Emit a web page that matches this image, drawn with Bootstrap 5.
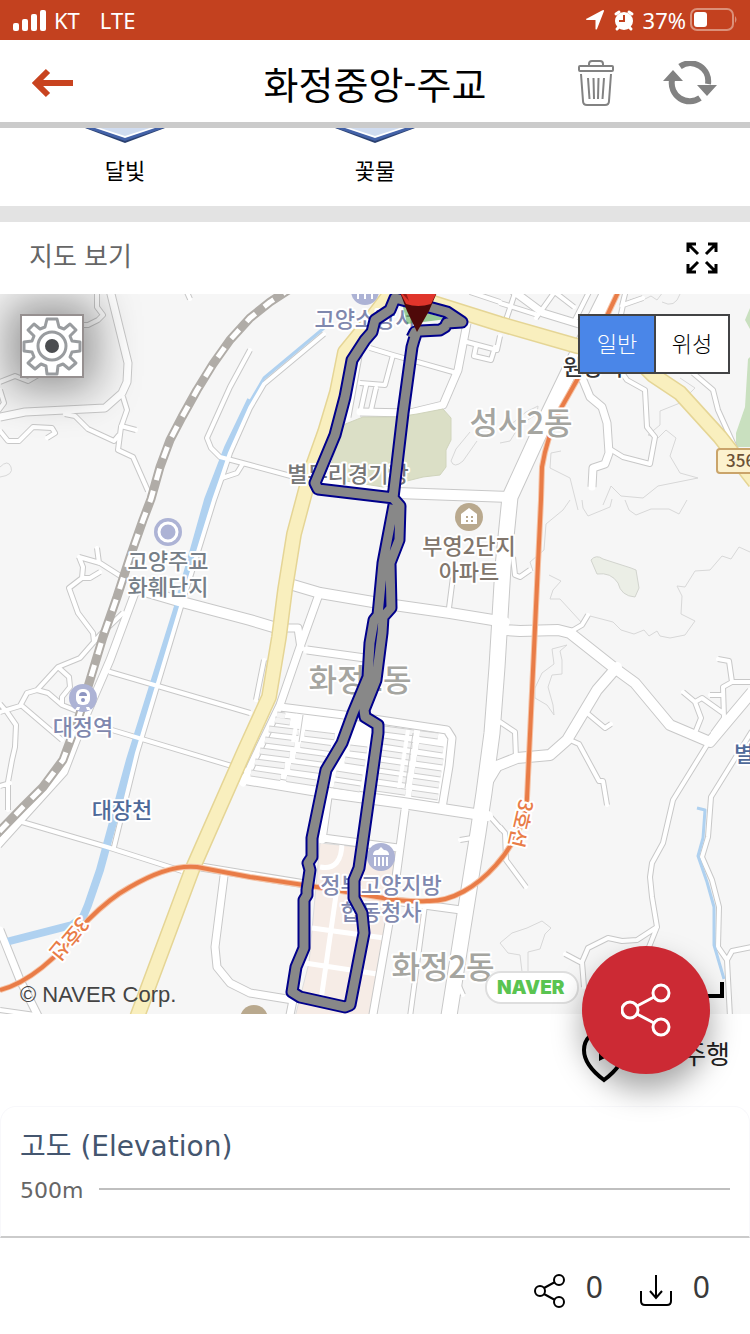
<!DOCTYPE html>
<html lang="ko">
<head>
<meta charset="utf-8">
<meta name="viewport" content="width=device-width, initial-scale=1">
<title>화정중앙-주교</title>
<link href="https://cdn.jsdelivr.net/npm/bootstrap@5.3.0/dist/css/bootstrap.min.css" rel="stylesheet">
<style>
body{font-family:"Noto Sans CJK KR","Noto Sans",sans-serif;background:#fff;color:#000}
svg{display:block}
.statusbar{background:#c3411f;color:#fff;height:40px;font:22px/40px "Noto Sans",sans-serif;padding:0 12px}
.carrier{margin-right:20px}
.topbar{height:88px;border-bottom:6px solid #cbcbcb;padding-top:4px}
.topbar h1{font-size:38px;line-height:56px;font-weight:400}
.topbar .side{flex:1 1 0}
.iconbtn{border:0;background:none;padding:0;color:inherit}
.crews{height:94px;border-bottom:16px solid #e3e3e3;font-size:22px;line-height:32px}
.crews .name{margin-top:9px}
.maphead{height:72px;background:#fff;z-index:1}
.maphead h2{font-size:26px;line-height:36px;font-weight:400;color:#666;padding-left:29px;padding-bottom:6px}
.mapbox{height:720px;background:#f6f6f6}
.mapbox>svg{width:100%;height:100%}
.gear{width:64px;height:64px;top:20px;left:20px;background:#fff;border:2px solid #969090;padding:0;box-shadow:0 0 44px 12px rgba(0,0,0,.4)}
.kinds{top:20px;right:20px;border:2px solid #424345}
.kinds label{width:74px;height:56px;font-size:22px;line-height:52px;font-weight:300;cursor:pointer;text-align:center}
.kinds label+input+label{border-left:2px solid #424345}
.kinds label{background:#fff}
.kinds input:checked+label{background:#4a86e8;color:#fff}
.copy{left:20px;bottom:4px;font:22px/30px "Liberation Sans",sans-serif;color:#444}
.ride{height:92px;font-size:26px;color:#222}
.fab{width:128px;height:128px;right:40px;bottom:-60px;background:#cc2a34;border:0;border-radius:50%;box-shadow:0 16px 30px rgba(0,0,0,.35);z-index:2}
.elev{border:1px solid #f8f8fb;border-bottom:2px solid #cbcbcb;border-radius:16px 16px 0 0;height:132px;padding:20px 19px 0}
.elev h2{font:400 28px/40px "DejaVu Sans","Noto Sans CJK KR",sans-serif;color:#44566f}
.elev .tick{font:22px/32px "DejaVu Sans",sans-serif;color:#666}
.elev .rule{height:2px;background:#bfbfbf}
.foot{font:30px/40px "Noto Sans",sans-serif;color:#3a3a3a}
.halo text{paint-order:stroke;stroke:#fff;stroke-width:4px;stroke-linejoin:round;font-family:"Noto Sans CJK KR",sans-serif;text-anchor:middle}
</style>
</head>
<body>
<div class="statusbar d-flex align-items-center">
  <svg width="34" height="22" viewBox="0 0 34 22" fill="#fff"><rect x="1" y="14" width="6" height="8" rx="2"/><rect x="10" y="10" width="6" height="12" rx="2"/><rect x="19" y="5" width="6" height="17" rx="2"/><rect x="28" y="1" width="6" height="21" rx="2"/></svg>
  <span class="ms-2 carrier">KT</span><span class="me-auto">LTE</span>
  <svg width="20" height="20" viewBox="0 0 20 20" fill="#fff"><path d="M19 1 12 19Q11 20 10.500 19V10H2Q0 9 2 8.500L17 0.500Q19-.5 19 1z"/></svg>
  <svg class="ms-2" width="22" height="24" viewBox="1 0 22 24"><circle cx="12" cy="13" r="9" fill="#fff"/><path d="M4 6 7 4M17 4l3 2M5 21l2-2M19 21l-2-2" stroke="#fff" stroke-width="3" stroke-linecap="round"/><path d="M12 7v6H7" fill="none" stroke="#c3411f" stroke-width="2"/></svg>
  <span class="ms-2 me-1">37%</span>
  <svg width="48" height="24" viewBox="0 0 48 24"><rect x="1" y="1" width="42" height="21" rx="6" fill="none" stroke="#db9079" stroke-width="2"/><rect x="4" y="4" width="13" height="15" rx="3" fill="#fff"/><path d="M45 8q3 3.500 0 7" fill="#db9079"/></svg>
</div>
<header class="topbar d-flex align-items-center">
  <div class="side"><button class="iconbtn d-block ms-4" aria-label="뒤로"><svg class="ms-2" width="42" height="30" viewBox="0 0 42 30"><path d="M41 15H5M16 3 4 15l12 12" fill="none" stroke="#c8431f" stroke-width="6"/></svg></button></div>
  <h1 class="m-0">화정중앙-주교</h1>
  <div class="side d-flex justify-content-end align-items-center gap-5">
    <button class="iconbtn" aria-label="삭제"><svg width="36" height="46" viewBox="0 0 36 46" fill="none" stroke="#828282" stroke-width="2"><path d="M11 6V4q0-3 3-3h8q3 0 3 3v2M3 14l2 27q0 4 4 4h18q4 0 4-4l2-27M10 18l1.500 21M15.500 18l.5 21M20.500 18l-.5 21M26 18l-1.500 21"/><rect x="1" y="6" width="34" height="5" rx="1"/></svg></button>
    <button class="iconbtn me-2" aria-label="새로고침"><svg class="me-4" width="56" height="44" viewBox="0 0 56 44"><path d="M18 5.500A18 18 0 0 1 46 23M38 37A18 18 0 0 1 10 19" fill="none" stroke="#828282" stroke-width="6"/><path d="M35 24h20L45 35zM1 20h20L11 9z" fill="#828282"/></svg></button>
  </div>
</header>
<section class="crews">
  <div class="row g-0 text-center">
    <div class="col-4"><svg class="mx-auto" width="80" height="16" viewBox="0 0 80 16"><path d="M0 0h80L40 15z" fill="#2a4170"/><path d="M1 0h78L40 13z" fill="#4362a8"/><path d="M10 0h60L40 10z" fill="#fff"/><path d="M15 0h50L40 8z" fill="#d0dcf0"/></svg><div class="name">달빛</div></div>
    <div class="col-4"><svg class="mx-auto" width="80" height="16" viewBox="0 0 80 16"><path d="M0 0h80L40 15z" fill="#2a4170"/><path d="M1 0h78L40 13z" fill="#4362a8"/><path d="M10 0h60L40 10z" fill="#fff"/><path d="M15 0h50L40 8z" fill="#d0dcf0"/></svg><div class="name">꽃물</div></div>
  </div>
</section>
<div class="maphead position-relative d-flex justify-content-between align-items-center">
  <h2 class="m-0">지도 보기</h2>
  <button class="iconbtn pe-3 me-3" aria-label="전체 화면"><svg width="32" height="32" viewBox="1 1 32 32" fill="none" stroke="#000" stroke-width="3"><path d="M3 11V3h8M3 3l10 10M23 3h8v8M31 3 21 13M3 23v8h8M3 31l10-10M31 23v8h-8M31 31 21 21"/></svg></button>
</div>
<div class="mapbox position-relative">
<svg viewBox="0 294 750 720" preserveAspectRatio="xMidYMin slice" fill="none" stroke-linejoin="round">
<defs>
<g id="minor">
<path d="M97 290v17l6 8-5 5-10 5h-8M0 382l15-6 13 5 12-7M0 390l4 13-6 8M0 431l8 10h11l14-14 19 1 3 5-8 5M65 414l10 2 13 13 26 12 5-6M123 397l4 13-6 17-3 23 15 7 15 34M121 426l15 4M186 290l4 9M250 350l-20 37-23 51 4 10 9 9 30 8 63 17M242 465l-5 8-15 5"/>
<path d="M324 334l-60 50-14 24-20 45-8 24-8 23-34 110-43 143-23 94M110 672l140 41M112 730l133 40M22 822l85 25 75 24M97 548l2 15M79 557l21 6 22 14M79 557l4 10-1 11h8l10-6M82 578l-13 10 9 25 15 20 1 9M123 613l-23 22-20 23-22 9-21 23-10 3-7 13-20 6M0 704l7 8 9 13-1 22-3 13-4 22v28M10 783l-10 3M58 667l11 10 1 10-8 10v8M37 690l11 3 14 12 15 6M21 705l41 35"/>
<path d="M370 348l23 7 60 17M393 355l-8 30-25-2M366 386l-5 23M376 388l-5 22M453 577l-4 31M264 660l-8 40M460 840l12-2M487 813l15 17M425 905l-15 112M455 977l8 18M489 780l12-14"/>
<path d="M570 632l12-7 6-10M587 713l18 15 6-4M570 740l9 4 20 37h4l4 24M683 692l12 10 6 16-6 15M695 702l7-4 21 15M718 659l11 2 3 21-9 5 1 31-11 15M732 682h20M710 695h13M707 745l-34 55-10 43-11 20-2 14 2 20 5 30-10 25M657 927l-20 13-15 1-14-3-20 10-6 14 2 25M565 954l17 9M752 731l-41 66-3 40-6 20 10 23 7 27-1 40 9 13 3 57M727 960l5-9 20-4M500 827l5 6 1 27 20 27M500 722l15 10 1 26M513 557l2 18 5 2 10-7"/>
<path d="M693 373l20 17 5 20 19 42M620 370l7 10 18 10 2 37 8 10-5 27-27-7-13-8M643 298l-20 7-3 14M626 290l-4 16M500 303l38 12M506 320l10-30M536 318l20-28M552 290l22 17M575 320l14-28M467 310l12 5M470 292l30 10M463 341l34 9 3-14M476 346l-2 10 17 4 4-13M0 1010l35 5"/>
</g>
<g id="medium">
<path d="M110 290l18 73-1 19-5 11-17 15-80 4-25 5M136 590l-26 70-26 60-20 52-66 73M0 930l20 50 20 40M201 867l110 18M224 876l-9 71 2 20 13 16 20 10 43 7-4 20M360 345l-13 72M360 412l50 1 33-8 15-35 9-47M287 628h11l3 20M307 650l58 8M280 707l80 10 87 13 5 8-3 28-7 42M318 597l-18 50-20 58-24 50-13 28M328 797l-6 43M323 838l75 10M405 810l-12 90-21 120M387 900l74 10M583 380l7 17 12 10 5 16 2 30-4 11-12 4-1 19M512 290l31 23 36 11"/>
</g>
<g id="wide">
<path d="M141 590l41 12 68 18 30 9M293 585l27 8 53 9 77 11 55 9M322 482l75 11 115 4M245 779l85 14 73 10 85 13M505 630l15 1 38-1 12 3 43 34 22 16 35 42 40 17 42-50M617 667l-20 23-30 50-17 15-33 3-20 8-12 20"/>
</g>
<path id="trunk" d="M612 285l-35 70-40 83-27 59-7 70-6 100-5 66-8 60-6 40-15 94-15 95"/>
<g id="yellow"><path d="M393 290l-30 40-18 22-8 40-12 40-15 42-16 60-9 56-6 47-10 60-25 55-52 118-56 150M430 302l70 22 77 22 63 16 13 13 27 18 40 44 35 45"/></g>
<path id="route" d="M416 334l-2 6-2 7-9 66-10 85 7 8-1 34-9 23 1 45-8 9-1 16-6 47-12 30 1 7 13 8v8l-19 135-5 12v18l8 15 2 20-14 72-5 2-45-10-8-5 4-25 8-19v-48l3-5 0-5 3-20-2-7 4-6v-19l14-68 6-10 10-17 11-30 15-36 2-34 4-23 4-5 5-52 11-58M394 498l-76-9-3-6 20-48 10-38 7-37 13-20 7-8 3-12 15-10 5-12 30 8 22 6 15 10-15 1-2 4-5 3-20 1-5 1-3 6"/>
</defs>
<path d="M750 308l-5 12 5 9zM748 359l-3 48-9 26v14h14v-90z" fill="#c9e0bf"/>
<g stroke="#d8d8d8" stroke-width="1">
<path d="M570 500l-7 10-17 14-2 26-14 12 3 9M582 500l1 8 5 8 22-9 2-8M625 500l4 10 7 5 15-6h18l10 5 8-14M750 552l-11-5-8 12-9-3-12 14-15 1-10 16-8-1 5 10-1 18 14 7-10 14-15 3-10-2-3-5-8 5-5-6-10 4-13-4-8-8-23-6-8 7-22-24h-10l3-9 8-9-12-6"/>
<path d="M567 645l-15 4 2 15-12 9-7 15v10l12 7 7 10-1-10-5-18 4-12 10-1v-14l-2-9zM500 443l10-2 10-16 17-11 1-8-12 6-12 10-14 5M561 451l-10 2-1 15 20 10 8 32M603 505l8-19 10 10 22 2 15-12 40-8-18-5-10-17 6-18-10-8-8 8-10-3 12-10 0-14 20-8 15-15-15-10"/>
<path d="M630 300l8-2 3 3 10-5 6 4 6-8M680 294q-5 15-18 8M500 943l12-10 15-5 15-7 9 7-6 6-5 15-12 3v20M500 943l8 10 12 2 3 25M0 467q8-8 11 0t-11 10M470 432l-14 17-5 12q3 8 12 0l14-20"/>
</g>
<path d="M591 560q5-6 12-1l28 9 5 2 3 18-4 9q-14-1-17-14-7-11-21-9z" fill="#ebeee6" stroke="#d2d4ce"/>
<path d="M280 710l168 20 3 12-8 62-200-28z" fill="#fff"/>
<path d="M320 843l76 8-24 166h-77l14-54z" fill="#f6ece6" stroke="#ddd"/>
<g stroke="#fff" stroke-width="5"><path d="M312 928l72 10M305 963l72 11M337 888l-16 112M320 867q22 4 22-25"/></g>
<g stroke="#c8c8c8"><use href="#minor" stroke-width="6"/><use href="#medium" stroke-width="9"/><use href="#wide" stroke-width="12"/><use href="#trunk" stroke-width="17"/></g>
<path d="M324 328l-60 50-14 24" stroke="#afd1f0" stroke-width="3"/>
<path d="M251 400l-23 48-20 52-31 110-47 150-30 110-12 35-5 12-11 8-66 17" stroke="#afd1f0" stroke-width="8"/>
<g stroke="#fff" stroke-linecap="round"><use href="#minor" stroke-width="4"/><use href="#medium" stroke-width="7"/><use href="#wide" stroke-width="10"/><use href="#trunk" stroke-width="15"/></g>
<path d="M697 808l8 2-2 28-5 18 9 26 7 25v38l10 34" stroke="#afd1f0" stroke-width="3"/>
<g stroke-linecap="butt">
<g stroke="#cfcfcf" stroke-width="7" stroke-dasharray="30 6"><path id="lotrows" d="M277 715l8 1M275 720l15 2M269 729l68 8M265 740l70 9M260 751l70 9M255 762l70 9M251 773l65 10M384 729l54 7M383 741l60 9M381 753l62 9M379 765l62 9M377 776l62 9M376 788l62 9M336 774l26 4M334 785l26 4M345 760l20 3M350 748l17 2"/></g>
<use href="#lotrows" stroke="#f4f4f4" stroke-width="5" stroke-dasharray="30 6"/>
<path d="M298 714l-5 28M408 730l-9 58M418 731l-9 60" stroke="#fff" stroke-width="4"/><path d="M303 715l-4 27M413 733l-8 55" stroke="#ccc" stroke-width="1"/>
</g>
<path d="M343 425l20-8h34l20-3 26-5 8 9v22l-5 10v17l-6 8-17 2-40 10-56-9z" fill="#dbdfc6" stroke="#d0d4bc"/>
<path d="M293 287l-23 15-20 16-20 22-17 24-16 26-15 27-12 23-10 27-9 32-8 21-13 37-13 40-14 40-13 43-12 40-15 40-20 27-20 20-28 29" stroke="#b0aca7" stroke-width="9"/>
<path d="M293 287l-23 15-20 16-20 22-17 24-16 26-15 27-12 23-10 27-9 32-8 21-13 37-13 40-14 40-13 43-12 40-15 40-20 27-20 20-28 29" stroke="#fff" stroke-width="5" stroke-dasharray="12 11"/>
<use href="#yellow" stroke="#e5d595" stroke-width="16"/><use href="#yellow" stroke="#f9efbe" stroke-width="13"/>
<path d="M620 288l-43 92-17 30q-13 27-18 57l-1 33-14 298c0 40-50 105-100 103q-20 1-44-3l-66-11-67-10-53-10q-28-3-67 20-20 11-42 33-48 60-88 70" stroke="#f5c3a6" stroke-width="6"/>
<path d="M620 288l-43 92-17 30q-13 27-18 57l-1 33-14 298c0 40-50 105-100 103q-20 1-44-3l-66-11-67-10-53-10q-28-3-67 20-20 11-42 33-48 60-88 70" stroke="#e97c47" stroke-width="4"/>
<g fill="#adb3d5"><circle cx="168" cy="532" r="14"/><circle cx="83" cy="698" r="14"/><circle cx="381" cy="857" r="14"/><circle cx="365" cy="291" r="14"/></g>
<circle cx="168" cy="532" r="9" stroke="#fff" stroke-width="3"/>
<path d="M358 294v5M365 293v6M372 294v5" stroke="#fff" stroke-width="2"/>
<g fill="#fff"><path d="M373 854q1-4 5-4l3-3 3 3q4 0 5 4v1h-16zM374 857h2v9h-2zM378 857h2v9h-2zM382 857h2v9h-2zM386 857h2v9h-2z"/><rect x="76" y="689" width="14" height="16" rx="6"/><path d="M77 707h3l-1 3h-4zM86 707h3l2 3h-4z"/></g>
<path d="M79 696q0-4 4-4t4 4z" fill="#8e96c2"/><circle cx="83" cy="700" r="2" fill="#8e96c2"/>
<g fill="#b9a98e"><circle cx="469" cy="517" r="14"/><circle cx="254" cy="1019" r="14"/></g>
<path d="M461 514l8-6 8 6v10h-16z" fill="#fff"/><path d="M466 516h2v2h-2zM471 516h2v2h-2zM466 520h2v2h-2zM471 520h2v2h-2z" fill="#b9a98e"/>
<rect x="717" y="449" width="60" height="24" rx="3" fill="#fcf2cf" stroke="#caa46a" stroke-width="2"/>
<g class="halo" font-size="22" font-weight="500">
<g fill="#7f88ae"><text x="365" y="327">고양소방서</text><text x="83" y="735">대정역</text><text x="381" y="893">정부고양지방</text><text x="381" y="920">합동청사</text></g>
<g fill="#777f88"><text x="168" y="569">고양주교</text><text x="168" y="595">화훼단지</text></g>
<text x="348" y="482" fill="#777">별무리경기장</text>
<g fill="#81766c"><text x="469" y="554">부영2단지</text><text x="469" y="580">아파트</text></g>
<g fill="#4f6a9a"><text x="122" y="818">대장천</text><text x="744" y="762">별</text></g>
<text x="593" y="375" fill="#333">원당역</text>
<g font-size="31" fill="#a5a5a0"><text x="521" y="434">성사2동</text><text x="360" y="691">화정1동</text><text x="443" y="978">화정2동</text></g>
<g font-size="20" fill="#e97c47"><text transform="translate(514 822) rotate(103)">3호선</text><text transform="translate(64 934) rotate(130)">3호선</text></g>
</g>
<text x="726" y="467" font-size="17" font-weight="500" fill="#6b5237" font-family="Noto Sans CJK KR, sans-serif">356</text>
<path d="M399 290l14 32 5-12 29 9-40 5z" fill="#3d9b35" opacity=".5"/>
<use href="#route" stroke="#00008b" stroke-width="13"/><use href="#route" stroke="#888" stroke-width="9"/>
<path d="M399 290h39l-9 21-12 21-10-21z" fill="#4f0909"/><path d="M399 290h39l-7 14q-13 4-25 0z" fill="#e0352b"/><path d="M399 290h6l4 11z" fill="#9b1c17"/>
<rect x="486" y="972" width="92" height="31" rx="15" fill="#fff" stroke="#dedede" stroke-width="2"/>
<text x="497" y="994" font-family="Inter, sans-serif" font-weight="900" font-size="19" fill="#5ac451">NAVER</text>
<path d="M690 996h32v-14" stroke="#000" stroke-width="4" stroke-linejoin="miter"/>
</svg>
<button class="gear position-absolute" aria-label="지도 설정"><svg width="60" height="60" viewBox="-30 -30 60 60" fill="none" stroke="#999c9f" stroke-width="3"><path stroke-linejoin="round" d="M-5-27H5L7-19 12-17 18-22 24-16 18-10 20-5 28-4V5L20 6 18 11 24 17 17 23 11 18 6 20 5 28H-5L-6 20-11 18-17 23-24 17-18 11-20 6-28 5V-4L-20-5-18-10-24-16-18-22-12-17-7-19z"/><circle r="14"/><circle r="7" fill="#4b4d50" stroke="none"/></svg></button>
<div class="kinds position-absolute d-flex" role="group" aria-label="지도 종류">
  <input type="radio" class="btn-check" name="kind" id="kind-normal" checked><label for="kind-normal">일반</label>
  <input type="radio" class="btn-check" name="kind" id="kind-sat"><label for="kind-sat">위성</label>
</div>
<span class="copy position-absolute">© NAVER Corp.</span>
<button class="fab position-absolute" aria-label="공유"><svg class="mx-auto" width="50" height="54" viewBox="1 0 50 54" fill="none" stroke="#fff" stroke-width="3"><circle cx="10" cy="27" r="8"/><circle cx="41" cy="10" r="8"/><circle cx="41" cy="44" r="8"/><path d="M17 23l17-9M17 31l17 9"/></svg></button>
</div>
<div class="ride d-flex justify-content-end align-items-center pe-3">
  <svg class="me-5 mb-2" width="44" height="56" viewBox="0 0 44 56"><path d="M22 52C10 43 2 33 2 22a20 20 0 0 1 40 0C42 33 34 43 22 52z" fill="none" stroke="#000" stroke-width="4"/><path d="M17 22l12 5-12 6z"/></svg>
  <span class="ms-2 pb-3 me-1">주행</span>
</div>
<section class="elev">
  <h2 class="m-0">고도 (Elevation)</h2>
  <div class="d-flex align-items-center mt-2"><span class="tick">500m</span><div class="rule flex-grow-1 ms-3 mb-1"></div></div>
</section>
<footer class="foot d-flex justify-content-end align-items-center pt-4 pe-4">
  <button class="iconbtn d-flex align-items-center me-3 mt-1"><svg class="mt-2" width="32" height="34" viewBox="0 0 32 34" fill="none" stroke="#000" stroke-width="2"><circle cx="6" cy="17" r="5"/><circle cx="25" cy="6" r="5"/><circle cx="25" cy="28" r="5"/><path d="M10 14l11-6M10 20l11 6"/></svg><span class="ms-3 ps-1 me-3 pe-1">0</span></button>
  <button class="iconbtn d-flex align-items-center me-3 mt-1"><svg class="mt-2" width="34" height="34" viewBox="0 0 34 34" fill="none" stroke="#000" stroke-width="2"><path d="M2 17v10q0 4 4 4h22q4 0 4-4V17M17 1v22M11 17l6 7 6-7"/></svg><span class="ms-3 ps-1">0</span></button>
</footer>
<script src="https://cdn.jsdelivr.net/npm/bootstrap@5.3.0/dist/js/bootstrap.bundle.min.js"></script>
</body>
</html>
